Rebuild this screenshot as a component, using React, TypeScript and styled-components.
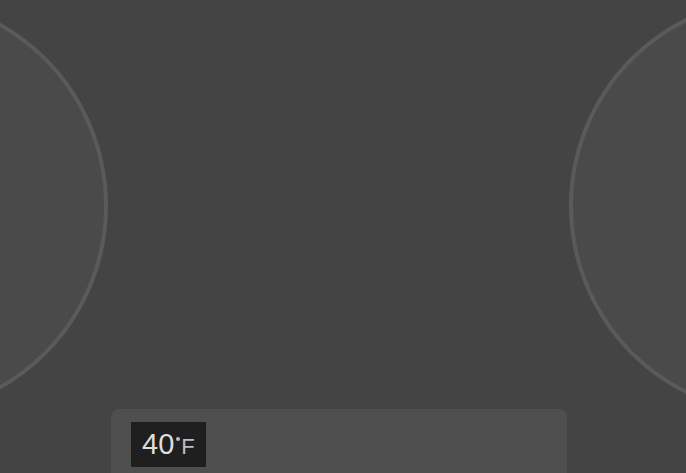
import React from 'react'
import styled, { createGlobalStyle } from 'styled-components'

const GlobalStyle = createGlobalStyle`
  html, body {
    margin: 0;
    padding: 0;
    background: #444444;
    overflow: hidden;
    font-family: "Liberation Sans", Arial, sans-serif;
  }
`

const Page = styled.div`
  width: 686px;
  height: 473px;
  display: flex;
  flex-direction: column;
  overflow: hidden;
  background: #444444;
`

const Stage = styled.div`
  height: 409px;
  flex-shrink: 0;
  display: flex;
  flex-direction: row;
  justify-content: space-between;
  align-items: flex-start;
`

const Burner = styled.div<{ $side: 'left' | 'right' }>`
  flex-shrink: 0;
  width: 420px;
  height: 420px;
  margin-top: -4px;
  box-sizing: border-box;
  border-radius: 50%;
  border: 4px solid #5a5a5a;
  background: #4a4a4a;
  margin-left: ${p => (p.$side === 'left' ? '-312px' : '0')};
  margin-right: ${p => (p.$side === 'right' ? '-303px' : '0')};
`

const Panel = styled.div`
  position: relative;
  z-index: 1;
  margin: 0 119px 0 111px;
  flex: 1;
  background: #4f4f4f;
  border-radius: 8px 8px 0 0;
  padding: 13px 20px 0;
  display: flex;
  align-items: flex-start;
`

const TempBadge = styled.div`
  width: 75px;
  height: 45px;
  box-sizing: border-box;
  background: #1f1f1f;
  padding-left: 11px;
  line-height: 45px;
  white-space: nowrap;
`

const Value = styled.span`
  font-size: 29px;
  color: #dedede;
`

const Deg = styled.span`
  display: inline-block;
  width: 4px;
  height: 4px;
  border-radius: 50%;
  background: #bdbdbd;
  vertical-align: 13px;
  margin: 0 1px 0 2px;
`

const Unit = styled.span`
  font-size: 22px;
  color: #bdbdbd;
`

export default function App() {
  return (
    <>
      <GlobalStyle />
      <Page>
        <Stage>
          <Burner $side="left" />
          <Burner $side="right" />
        </Stage>
        <Panel>
          <TempBadge>
            <Value>40</Value>
            <Deg />
            <Unit>F</Unit>
          </TempBadge>
        </Panel>
      </Page>
    </>
  )
}
